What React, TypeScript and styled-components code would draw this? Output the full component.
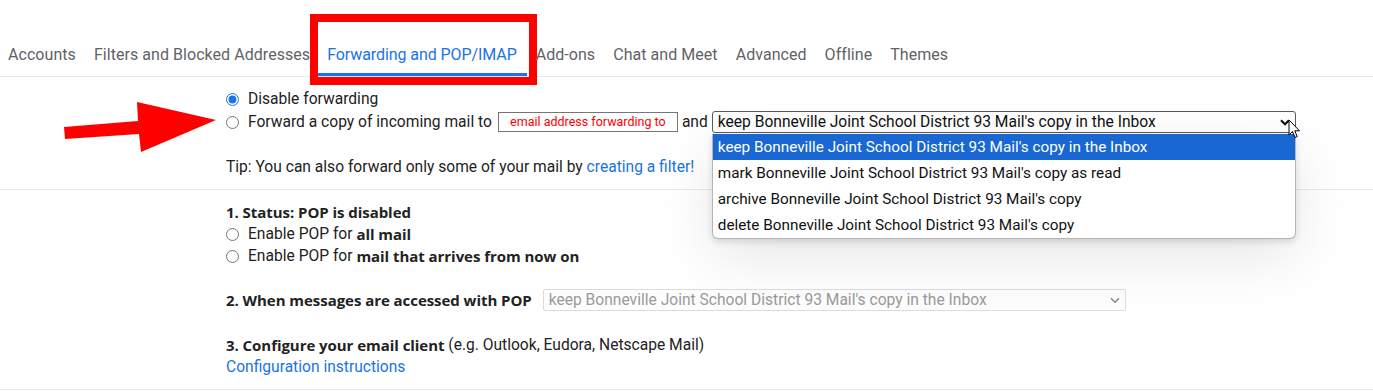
import React from "react";
import styled, { createGlobalStyle, css } from "styled-components";

const GlobalStyle = createGlobalStyle`
	html, body {
		margin: 0;
		padding: 0;
		background: #ffffff;
	}
	body {
		font-family: Roboto, "Liberation Sans", Arial, sans-serif;
		color: #222222;
	}
`;

const Page = styled.div`
	width: 1373px;
	height: 392px;
	overflow: hidden;
	background: #ffffff;
`;

const TabBar = styled.nav`
	display: flex;
	align-items: flex-end;
	height: 76px;
	border-bottom: 1px solid #e8eaed;
`;

const Tab = styled.div<{ $active?: boolean }>`
	position: relative;
	padding: 0 9px;
	height: 39px;
	line-height: 41px;
	font-size: 16px;
	letter-spacing: ${(p) => (p.$active ? "-0.08px" : "0.05px")};
	white-space: nowrap;
	color: ${(p) => (p.$active ? "#1a73e8" : "#5f6368")};
	border-bottom: 3px solid ${(p) => (p.$active ? "#1a73e8" : "transparent")};

	&:first-child {
		padding-left: 8px;
	}

	${(p) =>
		p.$active &&
		css`
			margin-left: -1px;
			padding-right: 10px;
			&::after {
				content: "";
				position: absolute;
				left: -8px;
				right: -10px;
				top: -20px;
				bottom: -12px;
				border: 8px solid #ff0000;
			}
		`}
`;

const Section = styled.section`
	position: relative;
	display: grid;
	grid-template-columns: 226px 1fr;
	padding: 11px 0;
	border-bottom: 1px solid #e8eaed;
	font-size: 15.6px;
	line-height: 22px;
`;

const Label = styled.div``;

const Options = styled.div`
	display: flex;
	flex-direction: column;
`;

const Row = styled.div<{ $gap?: number }>`
	display: flex;
	align-items: center;
	height: 22px;
	white-space: nowrap;
	margin-top: ${(p) => p.$gap ?? 0}px;
`;

const Radio = styled.input.attrs({ type: "radio" })`
	width: 13px;
	height: 13px;
	margin: 0 9px 0 0;
	accent-color: #1a73e8;
`;

const Bold = styled.b`
	font-family: "Open Sans", Roboto, sans-serif;
	font-size: 15px;
	font-weight: 700;
	letter-spacing: -0.05px;
`;

const Link = styled.a`
	color: #1a73e8;
	text-decoration: none;
`;

const AddressBox = styled.div`
	box-sizing: border-box;
	width: 180px;
	height: 20px;
	margin: 0 4px 0 6px;
	border: 1px solid #767676;
	color: #ff0000;
	font-size: 12.5px;
	line-height: 18px;
	text-align: center;
`;

const SelectWrap = styled.div<{ $offset?: number }>`
	position: relative;
	margin-left: ${(p) => p.$offset ?? 4}px;
`;

const FakeSelect = styled.div<{ $disabled?: boolean }>`
	box-sizing: border-box;
	width: ${(p) => (p.$disabled ? 583 : 584)}px;
	height: 22px;
	display: flex;
	align-items: center;
	justify-content: space-between;
	padding: 0 5px 0 5px;
	border: 1px solid ${(p) => (p.$disabled ? "#dadce0" : "#5a5a5a")};
	border-radius: ${(p) => (p.$disabled ? 2 : 3)}px;
	color: ${(p) => (p.$disabled ? "#9a9a9a" : "#111111")};
	background: ${(p) => (p.$disabled ? "#fdfdfd" : "#ffffff")};
	line-height: 20px;
`;

const DropList = styled.ul`
	position: absolute;
	top: 100%;
	left: 0;
	margin: 1px 0 0;
	padding: 0;
	list-style: none;
	box-sizing: border-box;
	width: 584px;
	background: #ffffff;
	border: 1px solid #b5b5b5;
	border-top: none;
	border-radius: 0 0 6px 6px;
	box-shadow: 0 3px 6px rgba(0, 0, 0, 0.12), 0 18px 60px rgba(0, 0, 0, 0.1);
	font-size: 15.3px;
	z-index: 2;
`;

const DropItem = styled.li<{ $selected?: boolean }>`
	height: 26px;
	line-height: 26px;
	padding: 0 5px;
	color: ${(p) => (p.$selected ? "#ffffff" : "#111111")};
	background: ${(p) => (p.$selected ? "#1967d2" : "transparent")};
`;

const Cursor = styled.svg`
	position: absolute;
	left: 576px;
	top: 8px;
	z-index: 3;
`;

const ArrowMark = styled.svg`
	position: absolute;
	left: 60px;
	top: 21px;
`;

const Chevron = ({ disabled }: { disabled?: boolean }) => (
	<svg width="10" height="7" viewBox="0 0 10 7">
		<path
			d="M1 1.2 L5 5.2 L9 1.2"
			fill="none"
			stroke={disabled ? "#8a8a8a" : "#111"}
			strokeWidth={disabled ? 1.5 : 2.2}
		/>
	</svg>
);

const tabs = [
	"Accounts",
	"Filters and Blocked Addresses",
	"Forwarding and POP/IMAP",
	"Add-ons",
	"Chat and Meet",
	"Advanced",
	"Offline",
	"Themes",
];

const keepOption = "keep Bonneville Joint School District 93 Mail's copy in the Inbox";

const forwardOptions = [
	keepOption,
	"mark Bonneville Joint School District 93 Mail's copy as read",
	"archive Bonneville Joint School District 93 Mail's copy",
	"delete Bonneville Joint School District 93 Mail's copy",
];

export default function App() {
	return (
		<Page>
			<GlobalStyle />
			<TabBar>
				{tabs.map((t) => (
					<Tab key={t} $active={t === "Forwarding and POP/IMAP"}>
						{t}
					</Tab>
				))}
			</TabBar>

			<Section>
				<ArrowMark width="160" height="58" viewBox="0 0 160 58">
					<polygon
						points="4,29 78,23 77,4 156,22 81,54 79,36 5,41"
						fill="#ff0000"
					/>
				</ArrowMark>
				<Label />
				<Options>
					<Row>
						<Radio name="fwd" defaultChecked />
						Disable forwarding
					</Row>
					<Row $gap={1}>
						<Radio name="fwd" />
						Forward a copy of incoming mail to
						<AddressBox>email address forwarding to</AddressBox>
						and
						<SelectWrap>
							<FakeSelect>
								<span>{keepOption}</span>
								<Chevron />
							</FakeSelect>
							<DropList>
								{forwardOptions.map((o, i) => (
									<DropItem key={o} $selected={i === 0}>
										{o}
									</DropItem>
								))}
							</DropList>
							<Cursor width="13" height="21" viewBox="0 0 13 21">
								<path
									d="M1 1 L1 16 L4.5 12.5 L7 18.5 L9.2 17.6 L6.8 11.8 L11.5 11.8 Z"
									fill="#fff"
									stroke="#000"
									strokeWidth="1"
									strokeLinejoin="round"
								/>
							</Cursor>
						</SelectWrap>
					</Row>
					<Row $gap={23}>
						Tip: You can also forward only some of your mail by&nbsp;
						<Link href="#">creating a filter!</Link>
					</Row>
				</Options>
			</Section>

			<Section>
				<Label />
				<Options>
					<Row>
						<Bold>1. Status: POP is disabled</Bold>
					</Row>
					<Row>
						<Radio name="pop" />
						Enable POP for&nbsp;<Bold>all mail</Bold>
					</Row>
					<Row>
						<Radio name="pop" />
						Enable POP for&nbsp;<Bold>mail that arrives from now on</Bold>
					</Row>
					<Row $gap={22}>
						<Bold>2. When messages are accessed with POP</Bold>
						<SelectWrap $offset={11}>
							<FakeSelect $disabled>
								<span>{keepOption}</span>
								<Chevron disabled />
							</FakeSelect>
						</SelectWrap>
					</Row>
					<Row $gap={23}>
						<Bold>3. Configure your email client</Bold>&nbsp;(e.g. Outlook, Eudora,
						Netscape Mail)
					</Row>
					<Row>
						<Link href="#">Configuration instructions</Link>
					</Row>
				</Options>
			</Section>
		</Page>
	);
}
